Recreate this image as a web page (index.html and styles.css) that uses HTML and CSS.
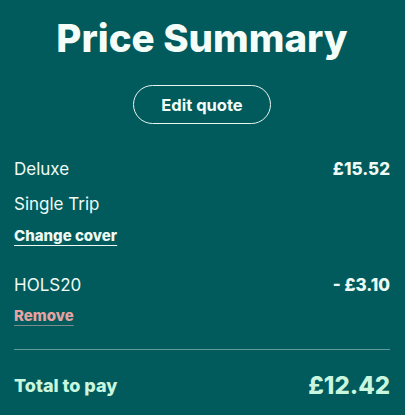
FILE: index.html
```html
<!DOCTYPE html>
<html>
<head>
<meta charset="utf-8">
<link rel="stylesheet" href="styles.css">
</head>
<body>
<div class="summary">
  <h1 class="title">Price Summary</h1>
  <div class="actions"><button class="edit-btn">Edit quote</button></div>
  <div class="row first">
    <span class="label">Deluxe</span>
    <span class="amount">£15.52</span>
  </div>
  <div class="row">
    <span class="label">Single Trip</span>
  </div>
  <div class="row link-row"><a class="link">Change cover</a></div>
  <div class="row promo">
    <span class="label">HOLS20</span>
    <span class="amount">- £3.10</span>
  </div>
  <div class="row link-row"><a class="link remove">Remove</a></div>
  <hr class="divider">
  <div class="row total">
    <span class="total-label">Total to pay</span>
    <span class="total-amount">£12.42</span>
  </div>
</div>
</body>
</html>
```
FILE: styles.css
```css
html, body {
  margin: 0;
  padding: 0;
  background: #015a5c;
}
body {
  font-family: Inter, "Noto Sans", sans-serif;
  color: #eefaf4;
}
.summary {
  padding: 13px 15px 0 14px;
  display: flex;
  flex-direction: column;
}
.title {
  margin: 0;
  text-align: center;
  font-size: 38.5px;
  font-weight: 800;
  line-height: 50px;
  letter-spacing: 0;
  color: #f4fdf8;
}
.actions {
  display: flex;
  justify-content: center;
  margin-top: 22px;
}
.edit-btn {
  width: 138px;
  height: 39px;
  border: 1.5px solid #e8f5f0;
  border-radius: 20px;
  background: transparent;
  color: #f4fdf8;
  font-family: inherit;
  font-size: 16.5px;
  font-weight: 700;
  padding: 0;
}
.row {
  display: flex;
  justify-content: space-between;
  align-items: center;
}
.row.first { margin-top: 33px; }
.row + .row { margin-top: 11px; }
.label {
  font-size: 17px;
  line-height: 24px;
}
.amount {
  font-size: 17px;
  font-weight: 800;
  line-height: 24px;
}
.link {
  font-size: 15px;
  font-weight: 800;
  line-height: 20px;
  text-decoration: underline;
  text-underline-offset: 4px;
  text-decoration-thickness: 1px;
  color: #eefaf4;
}
.row.link-row { margin-top: 10px; }
.row.promo { margin-top: 27px; }
.row.promo + .link-row { margin-top: 9px; }
.remove { color: #e7a3a1; text-decoration-color: #7d8c8a; }
.divider {
  border: 0;
  border-top: 1px solid #5f9b98;
  margin: 23px 0 0 0;
}
.row.total { margin-top: 21px; }
.total-label {
  font-size: 18px;
  font-weight: 800;
  color: #c9f6df;
}
.total-amount {
  font-size: 24px;
  font-weight: 800;
  color: #c9f6df;
}
```
